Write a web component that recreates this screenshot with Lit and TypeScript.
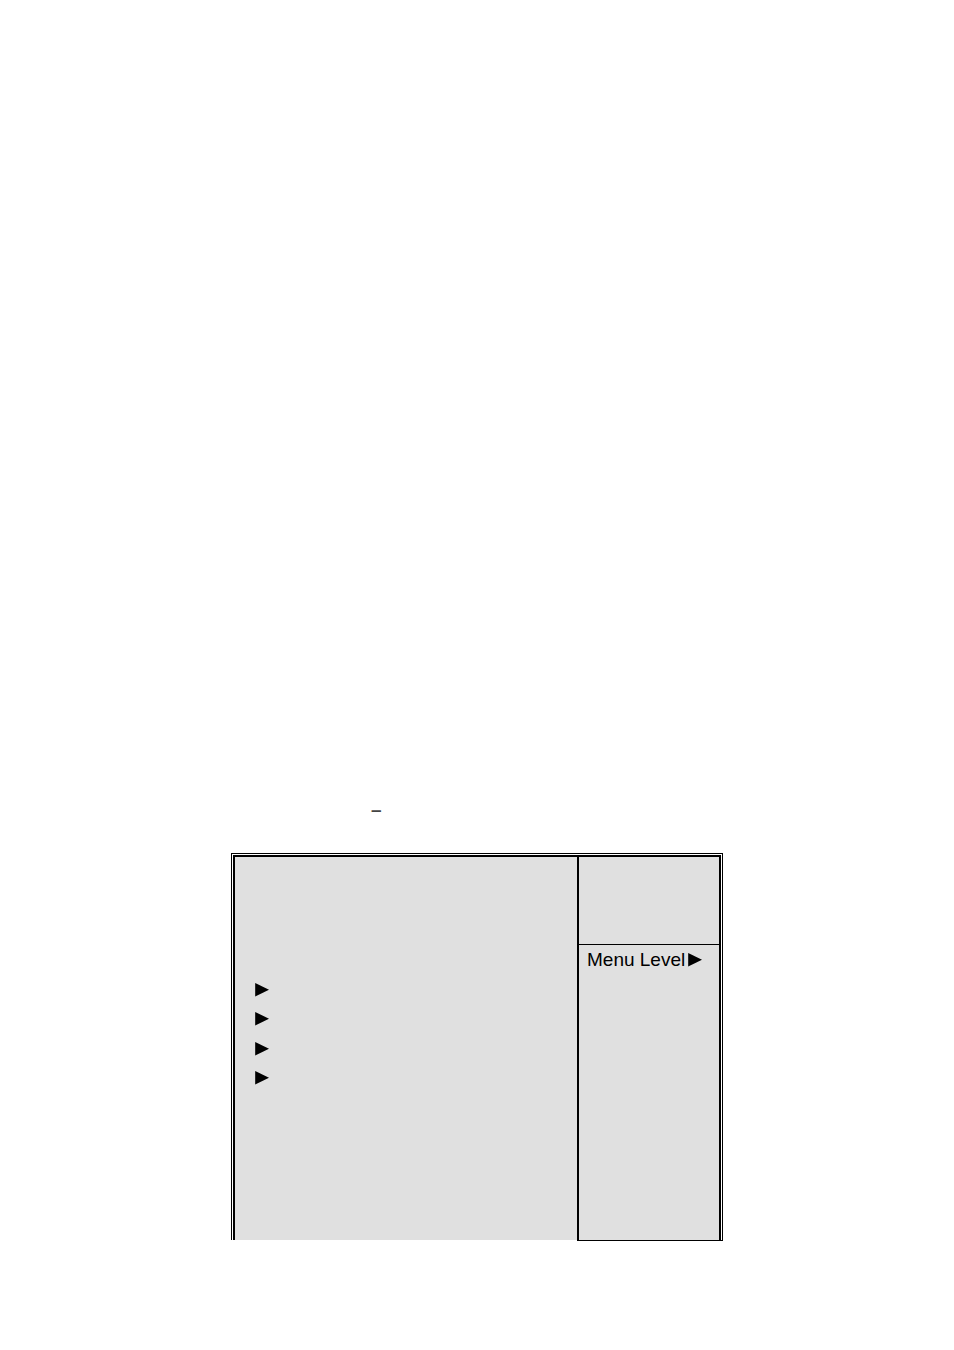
import { LitElement, html, css } from "lit";
import { customElement } from "lit/decorators.js";

@customElement("menu-arrow")
class MenuArrow extends LitElement {
  static styles = css`
    :host {
      display: block;
      width: 14px;
      height: 14px;
    }
    svg {
      display: block;
    }
  `;

  render() {
    return html`<svg width="14" height="14" viewBox="0 0 14 14" aria-hidden="true">
      <path d="M0.2 0 L14 6.7 L0.2 13.4 Z" fill="#000" />
    </svg>`;
  }
}

@customElement("app-root")
class AppRoot extends LitElement {
  static styles = css`
    :host {
      display: block;
      box-sizing: border-box;
      padding: 799px 16px 108px;
      background: #fff;
      color: #000;
      font-family: "Liberation Sans", Arial, sans-serif;
      font-size: 19px;
      line-height: 22px;
    }
    .page {
      max-width: 492px;
      margin: 0 auto;
    }
    .heading {
      margin: 0 0 32px;
      padding-left: 140px;
      font-size: 19px;
      font-weight: 700;
      color: #444;
    }
    .frame {
      display: flex;
    }
    .main {
      flex: 1;
      margin-bottom: 1px;
      padding: 1px 0 0 1px;
      border: solid #000;
      border-width: 1px 0 0 1px;
    }
    .side {
      flex: none;
      padding: 1px 1px 0 0;
      border: solid #000;
      border-width: 1px 1px 1px 0;
    }
    .main-body {
      min-height: 265px;
      padding: 118px 20px 0;
      border: solid #000;
      border-width: 2px 0 0 2px;
      background: #e0e0e0;
    }
    .side-body {
      width: 140px;
      min-height: 383px;
      border: solid #000;
      border-width: 2px 2px 0 2px;
      background: #e0e0e0;
    }
    .items {
      display: grid;
      grid-template-rows: repeat(4, 1fr);
      height: 118px;
      margin: 0;
      padding: 0;
      list-style: none;
    }
    .item {
      display: flex;
      align-items: center;
      width: 100%;
      height: 100%;
      padding: 0;
      border: 0;
      background: none;
      font: inherit;
    }
    .help {
      height: 87px;
      border-bottom: 1px solid #000;
    }
    .level {
      display: flex;
      align-items: center;
      gap: 3px;
      padding: 4px 8px;
      white-space: nowrap;
    }
  `;

  private items = [1, 2, 3, 4];

  render() {
    return html`
      <main class="page">
        <h1 class="heading">–</h1>
        <div class="frame">
          <section class="main">
            <div class="main-body">
              <ul class="items">
                ${this.items.map(
                  (n) => html`<li>
                    <button class="item" type="button" aria-label="Submenu ${n}">
                      <menu-arrow></menu-arrow>
                    </button>
                  </li>`
                )}
              </ul>
            </div>
          </section>
          <aside class="side">
            <div class="side-body">
              <div class="help"></div>
              <div class="level"><span>Menu Level</span><menu-arrow></menu-arrow></div>
            </div>
          </aside>
        </div>
      </main>
    `;
  }
}
